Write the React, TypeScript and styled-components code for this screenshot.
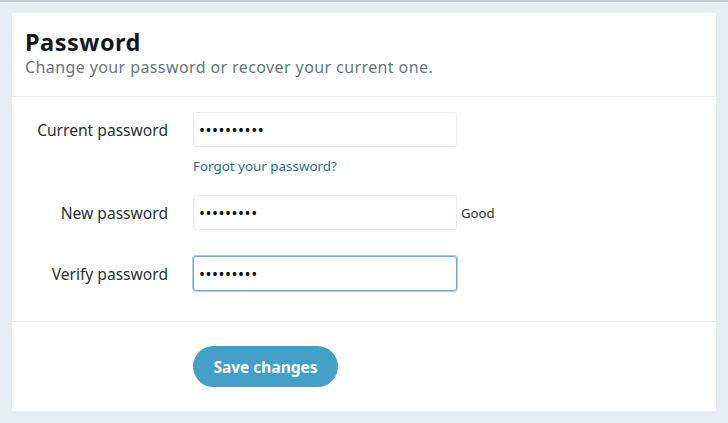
import React, { FC } from 'react';
import styled, { createGlobalStyle } from 'styled-components';

const GlobalStyle = createGlobalStyle`
  html, body {
    margin: 0;
    padding: 0;
    background: #e6ecf0;
    font-family: "Noto Sans", "Open Sans", sans-serif;
  }
  body {
    border-top: 2px solid #c4c8cc;
    height: 421px;
    overflow: hidden;
  }
`;

const Card = styled.div`
  margin: 11px 0 0 12px;
  width: 704px;
  height: 398px;
  background: #fff;
  display: flex;
  flex-direction: column;
`;

const Header = styled.div`
  padding: 14px 13px 0;
  height: 69px;
  border-bottom: 1px solid #e6ecf0;
`;

const Title = styled.h1`
  margin: 0;
  font-size: 23.5px;
  line-height: 30px;
  letter-spacing: 0.5px;
  font-weight: 700;
  color: #14171a;
`;

const Subtitle = styled.div`
  font-size: 16px;
  line-height: 21px;
  letter-spacing: 0.4px;
  color: #66757f;
`;

const Form = styled.div`
  padding: 15px 0 0;
  height: 209px;
  border-bottom: 1px solid #e6ecf0;
  display: flex;
  flex-direction: column;
`;

const Row = styled.div<{ $gap: number }>`
  display: grid;
  grid-template-columns: 156px 264px auto;
  column-gap: 25px;
  align-items: center;
  margin-bottom: ${(p) => p.$gap}px;
`;

const Label = styled.label`
  text-align: right;
  font-size: 15.6px;
  color: #292f33;
`;

const Input = styled.div<{ $focus?: boolean }>`
  box-sizing: border-box;
  height: 35px;
  border: 1px solid ${(p) => (p.$focus ? '#6cadce' : '#e6ecf0')};
  box-shadow: ${(p) => (p.$focus ? '0 0 0 1px #a8d1e6' : 'none')};
  border-radius: 3px;
  padding: 0 5px;
  display: flex;
  align-items: center;
  font-size: 16px;
  letter-spacing: 0.5px;
  color: #14171a;
`;

const Hint = styled.span`
  font-size: 13.2px;
  color: #292f33;
  margin-left: -21px;
`;

const LinkRow = styled.div`
  padding-left: 181px;
  margin-top: 7px;
  margin-bottom: 19px;
`;

const ForgotLink = styled.a`
  font-size: 13.4px;
  color: #1b6fa0;
  text-decoration: none;
`;

const Footer = styled.div`
  padding: 24px 0 0 181px;
`;

const SaveButton = styled.button`
  height: 41px;
  width: 145px;
  border: none;
  border-radius: 21px;
  background: #44a0c9;
  color: #fff;
  font-family: "Noto Sans", "Open Sans", sans-serif;
  font-size: 15.5px;
  font-weight: 700;
`;

const dots = (n: number) => '•'.repeat(n);

const App: FC = () => (
  <>
    <GlobalStyle />
    <Card>
      <Header>
        <Title>Password</Title>
        <Subtitle>Change your password or recover your current one.</Subtitle>
      </Header>
      <Form>
        <Row $gap={0}>
          <Label>Current password</Label>
          <Input>{dots(10)}</Input>
        </Row>
        <LinkRow>
          <ForgotLink href="#">Forgot your password?</ForgotLink>
        </LinkRow>
        <Row $gap={26}>
          <Label>New password</Label>
          <Input>{dots(9)}</Input>
          <Hint>Good</Hint>
        </Row>
        <Row $gap={0}>
          <Label>Verify password</Label>
          <Input $focus>{dots(9)}</Input>
        </Row>
      </Form>
      <Footer>
        <SaveButton>Save changes</SaveButton>
      </Footer>
    </Card>
  </>
);

export default App;
